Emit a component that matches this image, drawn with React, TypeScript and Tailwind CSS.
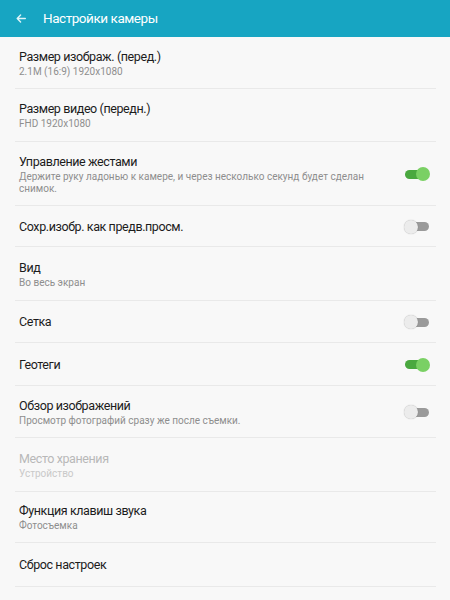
import React from "react";

type Row = {
  title: string;
  sub?: React.ReactNode;
  h: number;
  toggle?: "on" | "off";
  disabled?: boolean;
};

const rows: Row[] = [
  { title: "Размер изображ. (перед.)", sub: "2.1M (16:9) 1920x1080", h: 52 },
  { title: "Размер видео (передн.)", sub: "FHD 1920x1080", h: 53 },
  {
    title: "Управление жестами",
    sub: (
      <>
        Держите руку ладонью к камере, и через несколько секунд будет сделан
        <br />
        снимок.
      </>
    ),
    h: 64,
    toggle: "on",
  },
  { title: "Сохр.изобр. как предв.просм.", h: 41, toggle: "off" },
  { title: "Вид", sub: "Во весь экран", h: 54 },
  { title: "Сетка", h: 42, toggle: "off" },
  { title: "Геотеги", h: 43, toggle: "on" },
  { title: "Обзор изображений", sub: "Просмотр фотографий сразу же после съемки.", h: 52, toggle: "off" },
  { title: "Место хранения", sub: "Устройство", h: 54, disabled: true },
  { title: "Функция клавиш звука", sub: "Фотосъемка", h: 51 },
  { title: "Сброс настроек", h: 44 },
];

function Toggle({ on }: { on: boolean }) {
  return (
    <div className="relative w-[26px] h-[14px] flex items-center">
      <div className={"absolute left-[1px] right-[1px] h-[9px] rounded-full " + (on ? "bg-[#4aa83f]" : "bg-[#9a9a9a]")} />
      <div
        className={
          "absolute w-[14px] h-[14px] rounded-full " +
          (on ? "right-0 bg-[#7ad064]" : "left-0 bg-[#ececec] shadow-[0_0_1px_rgba(0,0,0,0.35)]")
        }
      />
    </div>
  );
}

export default function App() {
  return (
    <div className="w-[450px] h-[600px] overflow-hidden bg-[#f8f8f8]" style={{ fontFamily: "Roboto, 'Noto Sans', sans-serif" }}>
      <div className="h-[37px] bg-[#17a5c2] flex items-center">
        <svg className="ml-[16px]" width="10" height="9" viewBox="0 0 10 9" fill="none" stroke="#dff4f8" strokeWidth="1.4" strokeLinecap="round" strokeLinejoin="round">
          <path d="M9.3 4.5H1.2M4.6 1.1L1.2 4.5L4.6 7.9" />
        </svg>
        <span className="ml-[17px] text-[13.5px] tracking-[-0.45px] text-white leading-none">Настройки камеры</span>
      </div>
      <div>
        {rows.map((r, i) => (
          <div key={i} className="relative flex items-center pl-[19px] pr-[20px]" style={{ height: r.h }}>
            <div className="flex-1 flex flex-col">
              <div className={"text-[12.5px] tracking-[-0.4px] leading-[16px] " + (r.disabled ? "text-[#b8b8b8]" : "text-[#1c1c1c]")}>{r.title}</div>
              {r.sub && (
                <div className={"text-[10px] leading-[12px] mt-[1px] " + (r.disabled ? "text-[#c9c9c9]" : "text-[#8e8e8e]")}>{r.sub}</div>
              )}
            </div>
            {r.toggle && <Toggle on={r.toggle === "on"} />}
            <div className="absolute left-[15px] right-[14px] bottom-0 h-px bg-[#e9e9e9]" />
          </div>
        ))}
      </div>
    </div>
  );
}
